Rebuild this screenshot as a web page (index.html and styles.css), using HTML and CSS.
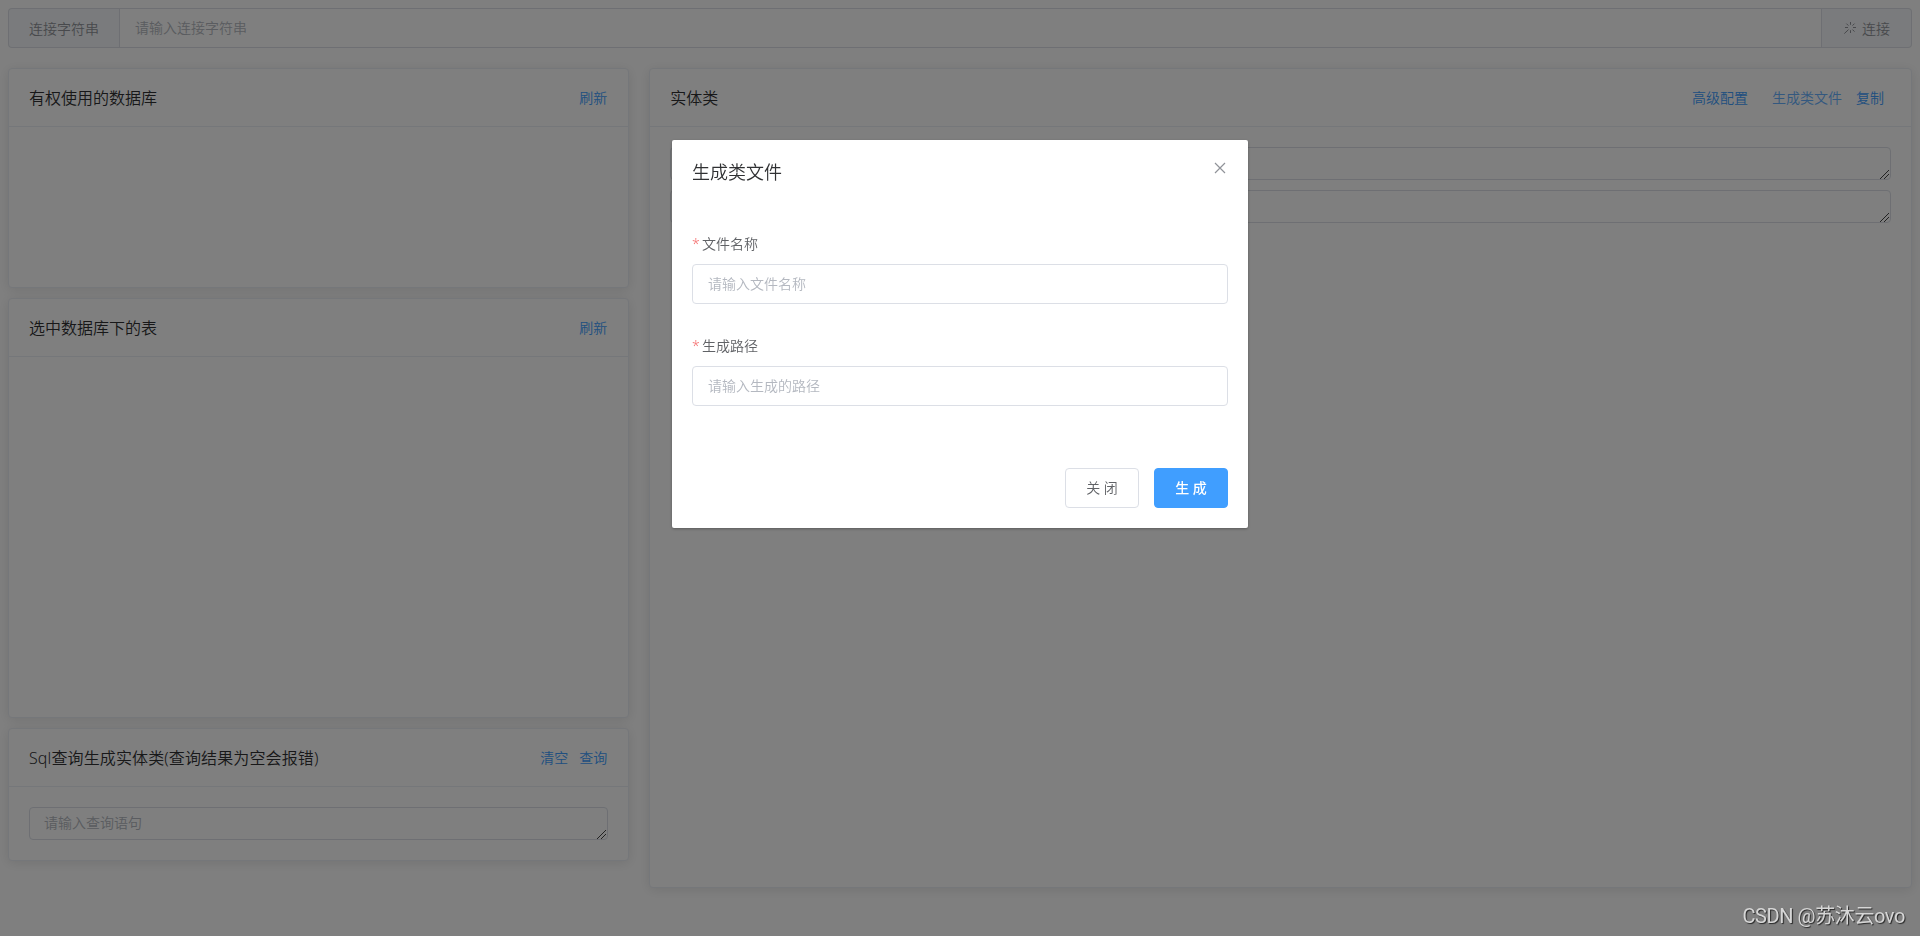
FILE: index.html
```html
<!DOCTYPE html>
<html lang="zh-CN">
<head>
    <meta charset="UTF-8">
    <meta name="viewport" content="width=device-width, initial-scale=1.0">
    <title>实体类生成</title>
    <link rel="stylesheet" href="styles.css">
</head>
<body>
    <div class="input-group">
        <div class="prepend">连接字符串</div>
        <input class="input" type="text" placeholder="请输入连接字符串">
        <button class="append">
            <svg class="icon-loading" width="14" height="14" viewBox="0 0 14 14">
                <path d="M7.5 1v2.8M7.5 9.2v2.8M2 6.5h3M10 6.5h3M3.4 2.6l2 2M11.5 2.6l-2 2M5.5 8.6L1.3 12.6M9.5 8.6l2 2"/>
            </svg>
            <span>连接</span>
        </button>
    </div>

    <div class="row">
        <div class="col-left">
            <!-- 数据库列表 -->
            <div class="card card-db">
                <div class="card-header">
                    <span>有权使用的数据库</span>
                    <div class="actions"><a class="link">刷新</a></div>
                </div>
            </div>
            <!-- 表列表 -->
            <div class="card card-table">
                <div class="card-header">
                    <span>选中数据库下的表</span>
                    <div class="actions"><a class="link">刷新</a></div>
                </div>
            </div>
            <!-- Sql查询 -->
            <div class="card">
                <div class="card-header">
                    <span class="sql-title">Sql查询生成实体类(查询结果为空会报错)</span>
                    <div class="actions"><a class="link">清空</a><a class="link">查询</a></div>
                </div>
                <div class="card-body">
                    <div class="textarea-wrap">
                        <textarea class="textarea" placeholder="请输入查询语句"></textarea>
                        <svg class="grip" width="9" height="9" viewBox="0 0 9 9"><path d="M0 9L9 0M4 9L9 4"/></svg>
                    </div>
                </div>
            </div>
        </div>
        <div class="card col-right">
            <div class="card-header">
                <span>实体类</span>
                <div class="actions actions-entity">
                    <a class="link link-config">高级配置</a>
                    <a class="link link-focus">生成类文件</a>
                    <a class="link">复制</a>
                </div>
            </div>
            <div class="card-body">
                <div class="textarea-wrap">
                    <textarea class="textarea"></textarea>
                    <svg class="grip" width="9" height="9" viewBox="0 0 9 9"><path d="M0 9L9 0M4 9L9 4"/></svg>
                </div>
                <div class="textarea-wrap">
                    <textarea class="textarea"></textarea>
                    <svg class="grip" width="9" height="9" viewBox="0 0 9 9"><path d="M0 9L9 0M4 9L9 4"/></svg>
                </div>
            </div>
        </div>
    </div>

    <!-- 生成类文件弹窗 -->
    <div class="modal">
        <div class="dialog">
            <div class="dialog-header">
                <span>生成类文件</span>
                <svg class="icon-close" width="16" height="16" viewBox="0 0 16 16">
                    <path d="M3 3l10 10M13 3L3 13"/>
                </svg>
            </div>
            <form class="dialog-body">
                <div class="form-item">
                    <label>文件名称</label>
                    <input class="input" type="text" placeholder="请输入文件名称">
                </div>
                <div class="form-item">
                    <label>生成路径</label>
                    <input class="input" type="text" placeholder="请输入生成的路径">
                </div>
            </form>
            <div class="dialog-footer">
                <button class="btn">关 闭</button>
                <button class="btn btn-primary">生 成</button>
            </div>
        </div>
    </div>

    <div class="watermark">CSDN @苏沐云ovo</div>
</body>
</html>
```

FILE: styles.css
```css
* {
    box-sizing: border-box;
}
body {
    margin: 0;
    padding: 8px;
    height: 936px;
    overflow: hidden;
    font-family: "Noto Sans", "Noto Sans CJK SC", sans-serif;
    font-weight: 350;
    font-size: 16px;
    color: #000;
}
input, textarea, button {
    font-family: inherit;
    font-weight: inherit;
    outline: none;
}
.input {
    width: 100%;
    height: 40px;
    padding: 0 15px 2px;
    border: 1px solid #dcdfe6;
    border-radius: 4px;
    background: #fff;
    font-size: 14px;
    color: #606266;
}
::placeholder {
    color: #b4b8c0;
}

/* 连接字符串 */
.input-group {
    display: flex;
    height: 40px;
    font-size: 14px;
    margin-bottom: 20px;
}
.input-group .input {
    flex: 1;
    border-radius: 0;
}
.prepend, .append {
    display: flex;
    align-items: center;
    padding: 0 20px;
    border: 1px solid #dcdfe6;
    background: #f5f7fa;
    color: #909399;
    font-size: 14px;
    white-space: nowrap;
}
.prepend {
    border-right: 0;
    border-radius: 4px 0 0 4px;
}
.append {
    gap: 5px;
    border-left: 0;
    border-radius: 0 4px 4px 0;
    width: 90px;
    padding: 0 20px 0 21px;
}
.icon-loading {
    stroke: #909399;
    fill: none;
}

/* 卡片 */
.row {
    display: grid;
    grid-template-columns: 621.33px 1fr;
    gap: 20px;
    align-items: start;
}
.col-left {
    display: flex;
    flex-direction: column;
    gap: 10px;
}
.card {
    border: 1px solid #ebeef5;
    border-radius: 4px;
    background: #fff;
    box-shadow: 0 2px 12px 0 rgba(0, 0, 0, 0.1);
}
.card-db {
    height: 220px;
}
.card-table {
    height: 420px;
}
.col-right {
    height: 820px;
}
.card-header {
    display: flex;
    align-items: center;
    justify-content: space-between;
    height: 58px;
    padding: 0 20px 1px;
    border-bottom: 1px solid #ebeef5;
    color: #303133;
}
.sql-title {
    letter-spacing: 0.12px;
}
.card-body {
    display: flex;
    flex-direction: column;
    gap: 10px;
    padding: 20px;
}
.actions {
    display: flex;
    gap: 11px;
    padding: 1px 1px 0 0;
}
.actions-entity {
    gap: 14px;
    padding-right: 7px;
}
.link {
    font-size: 14px;
    line-height: 20px;
    color: #409eff;
}
.link-config {
    margin-right: 10px;
}
.link-focus {
    color: #66b1ff;
}
.textarea-wrap {
    position: relative;
}
.textarea {
    display: block;
    width: 100%;
    height: 33px;
    padding: 4px 14px 5px;
    border: 1px solid #dcdfe6;
    border-radius: 4px;
    font-size: 14px;
    line-height: 21px;
    resize: none;
    overflow: hidden;
}
.grip {
    position: absolute;
    right: 2px;
    bottom: 1px;
    stroke: #444;
    fill: none;
}

/* 弹窗 */
.modal {
    position: fixed;
    inset: 0;
    background: rgba(0, 0, 0, 0.5);
}
.dialog {
    width: 30%;
    margin: 140px auto 0;
    border-radius: 2px;
    background: #fff;
    box-shadow: 0 1px 3px rgba(0, 0, 0, 0.3);
}
.dialog-header {
    display: flex;
    justify-content: space-between;
    padding: 20px 20px 10px;
    font-size: 18px;
    line-height: 24px;
    color: #303133;
}
.icon-close {
    stroke: #909399;
    stroke-width: 1.2;
    fill: none;
}
.dialog-body {
    padding: 30px 20px;
}
.form-item {
    margin-bottom: 22px;
}
.form-item label {
    display: block;
    height: 40px;
    line-height: 40px;
    font-size: 14px;
    color: #606266;
}
.form-item label::before {
    content: "*";
    display: inline-block;
    width: 6px;
    margin-right: 4px;
    color: #f56c6c;
}
.form-item .input {
    display: block;
}
.dialog-footer {
    display: flex;
    justify-content: flex-end;
    gap: 15px;
    padding: 10px 20px 20px;
}
.btn {
    width: 74px;
    height: 40px;
    padding: 0 0 2px;
    border: 1px solid #dcdfe6;
    border-radius: 4px;
    background: #fff;
    font-size: 14px;
    color: #606266;
}
.btn-primary {
    border-color: #409eff;
    background: #409eff;
    font-weight: 500;
    color: #fff;
}

.watermark {
    position: fixed;
    right: 15px;
    bottom: 5px;
    font-family: Roboto, "Noto Sans CJK SC", sans-serif;
    font-size: 20px;
    font-weight: 400;
    letter-spacing: -0.4px;
    line-height: 30px;
    color: #d6d6d6;
    text-shadow: 1px 1px 1px rgba(0, 0, 0, 0.7);
}
```
